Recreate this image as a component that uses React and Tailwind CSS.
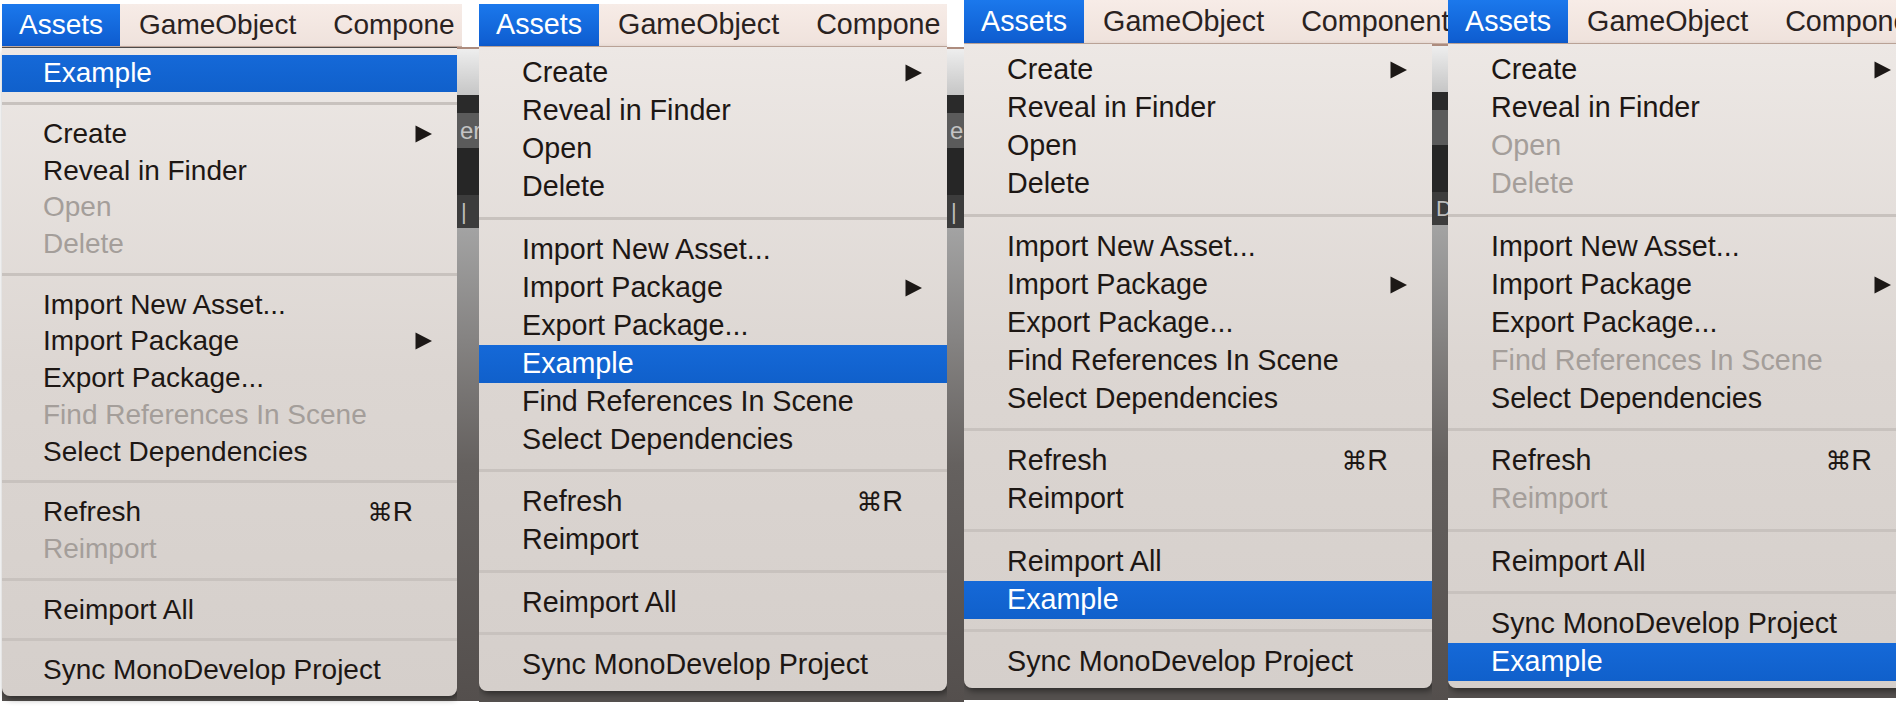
import React from "react";

const SEP = { sep: true };

const base = {
  create: { label: "Create", arrow: true },
  reveal: { label: "Reveal in Finder" },
  open: { label: "Open" },
  del: { label: "Delete" },
  importNew: { label: "Import New Asset..." },
  importPkg: { label: "Import Package", arrow: true },
  exportPkg: { label: "Export Package..." },
  find: { label: "Find References In Scene" },
  select: { label: "Select Dependencies" },
  refresh: { label: "Refresh", shortcut: true },
  reimport: { label: "Reimport" },
  reimportAll: { label: "Reimport All" },
  sync: { label: "Sync MonoDevelop Project" },
  example: { label: "Example", active: true },
};

const off = (item) => ({ ...item, disabled: true });

const panels = [
  {
    wrap: "w-[479px] pl-[2px]",
    top: "h-[4px]",
    bar: "w-[460px] h-[43px] text-[28px]",
    third: "Compone",
    back: "h-[654px]",
    menu: "w-[455px] mt-[1px]",
    big: false,
    strip: "er",
    items: [
      base.example,
      SEP,
      base.create,
      base.reveal,
      off(base.open),
      off(base.del),
      SEP,
      base.importNew,
      base.importPkg,
      base.exportPkg,
      off(base.find),
      base.select,
      SEP,
      base.refresh,
      off(base.reimport),
      SEP,
      base.reimportAll,
      SEP,
      base.sync,
    ],
  },
  {
    wrap: "w-[485px]",
    top: "h-[4px]",
    bar: "w-[468px] h-[43px] text-[28.7px]",
    third: "Compone",
    back: "h-[655px]",
    menu: "w-[468px]",
    big: true,
    strip: "er",
    items: [
      base.create,
      base.reveal,
      base.open,
      base.del,
      SEP,
      base.importNew,
      base.importPkg,
      base.exportPkg,
      base.example,
      base.find,
      base.select,
      SEP,
      base.refresh,
      base.reimport,
      SEP,
      base.reimportAll,
      SEP,
      base.sync,
    ],
  },
  {
    wrap: "w-[484px]",
    top: "h-0",
    bar: "w-[484px] h-[44px] text-[28.7px]",
    third: "Component",
    back: "h-[656px]",
    menu: "w-[468px]",
    big: true,
    strip: "D",
    items: [
      base.create,
      base.reveal,
      base.open,
      base.del,
      SEP,
      base.importNew,
      base.importPkg,
      base.exportPkg,
      base.find,
      base.select,
      SEP,
      base.refresh,
      base.reimport,
      SEP,
      base.reimportAll,
      base.example,
      SEP,
      base.sync,
    ],
  },
  {
    wrap: "w-[448px]",
    top: "h-0",
    bar: "w-[448px] h-[44px] text-[28.7px]",
    third: "Component",
    back: "h-[654px]",
    menu: "w-[468px] shrink-0",
    big: true,
    strip: null,
    items: [
      base.create,
      base.reveal,
      off(base.open),
      off(base.del),
      SEP,
      base.importNew,
      base.importPkg,
      base.exportPkg,
      off(base.find),
      base.select,
      SEP,
      base.refresh,
      off(base.reimport),
      SEP,
      base.reimportAll,
      SEP,
      base.sync,
      base.example,
    ],
  },
];

function MenuBar({ cls, third }) {
  return (
    <div
      className={`flex shrink-0 overflow-hidden border-b border-[#c6ada1] bg-linear-to-b from-[#f7ece7] to-[#efe2dc] ${cls}`}
    >
      <div className="flex items-center bg-linear-to-b from-[#1b78ec] to-[#0e5ccf] px-[17px] text-white">
        Assets
      </div>
      <div className="flex items-center px-[19px] text-[#2a221f]">
        GameObject
      </div>
      <div className="flex items-center whitespace-nowrap pl-[18px] text-[#2a221f]">
        {third}
      </div>
    </div>
  );
}

function Arrow() {
  return (
    <svg width="17" height="18" viewBox="0 0 17 18" className="shrink-0">
      <polygon points="0.5,0.5 17,9 0.5,17.5" fill="#1c1816" />
    </svg>
  );
}

function Row({ item, big }) {
  let tone = "text-[#1d1714]";
  if (item.active) tone = "bg-linear-to-b from-[#1569d8] to-[#1060cb] text-white";
  else if (item.disabled) tone = "text-[#a49e9a]";

  return (
    <div
      className={`flex items-center pr-[25px] ${
        big ? "h-[38px] pl-[43px] text-[28.7px]" : "h-[36.7px] pl-[41px] text-[28px]"
      } ${tone}`}
    >
      <span className="flex-1 whitespace-nowrap">{item.label}</span>
      {item.arrow && <Arrow />}
      {item.shortcut && (
        <span className="mr-[19px] whitespace-nowrap">
          <span className="font-['DejaVu_Sans',sans-serif] text-[0.9em]">⌘</span>R
        </span>
      )}
    </div>
  );
}

function Separator({ big }) {
  return (
    <div className={`flex flex-col justify-center ${big ? "h-[24.5px]" : "h-[24px]"}`}>
      <div className="h-[3px] bg-[#c8c2be]" />
    </div>
  );
}

function Strip({ text }) {
  return (
    <div className="flex min-w-0 flex-1 flex-col overflow-hidden">
      <div className="h-[2px] bg-[#ad8c7e]" />
      <div className="h-[46px] bg-linear-to-b from-[#eeeeee] to-[#c6c6c6]" />
      <div className="h-[18px] bg-[#2a2a2a]" />
      <div className="flex h-[35px] items-center bg-[#5b5b5b] pl-[3px] text-[24px] leading-none text-[#c4c4c4]">
        {text === "er" ? "er" : ""}
      </div>
      <div className="h-[47px] bg-[#262626]" />
      <div className="flex h-[33px] items-center bg-[#3c3c3c] pl-[4px] text-[22px] leading-none text-[#bdbdbd]">
        {text === "D" ? "D" : "|"}
      </div>
      <div className="flex-1 bg-linear-to-b from-[#a3a3a3] via-[#65615f] to-[#544f4d]" />
    </div>
  );
}

function Panel({ p }) {
  return (
    <div className={`flex shrink-0 flex-col overflow-hidden ${p.wrap}`}>
      <div className={p.top} />
      <MenuBar cls={p.bar} third={p.third} />
      <div className={`flex bg-[#54504e] ${p.back}`}>
        <div
          className={`self-start overflow-hidden rounded-b-[8px] bg-linear-to-b from-[#ede8e5] via-[#dcd6d2] to-[#d5cfcb] py-[7px] shadow-[2px_3px_6px_rgba(0,0,0,0.45)] ${p.menu}`}
        >
          {p.items.map((item, i) =>
            item.sep ? (
              <Separator key={i} big={p.big} />
            ) : (
              <Row key={i} item={item} big={p.big} />
            )
          )}
        </div>
        {p.strip && <Strip text={p.strip} />}
      </div>
    </div>
  );
}

export default function App() {
  return (
    <div className="flex h-[718px] w-[1896px] overflow-hidden bg-white font-['Liberation_Sans',Arial,sans-serif]">
      {panels.map((p, i) => (
        <Panel key={i} p={p} />
      ))}
    </div>
  );
}
